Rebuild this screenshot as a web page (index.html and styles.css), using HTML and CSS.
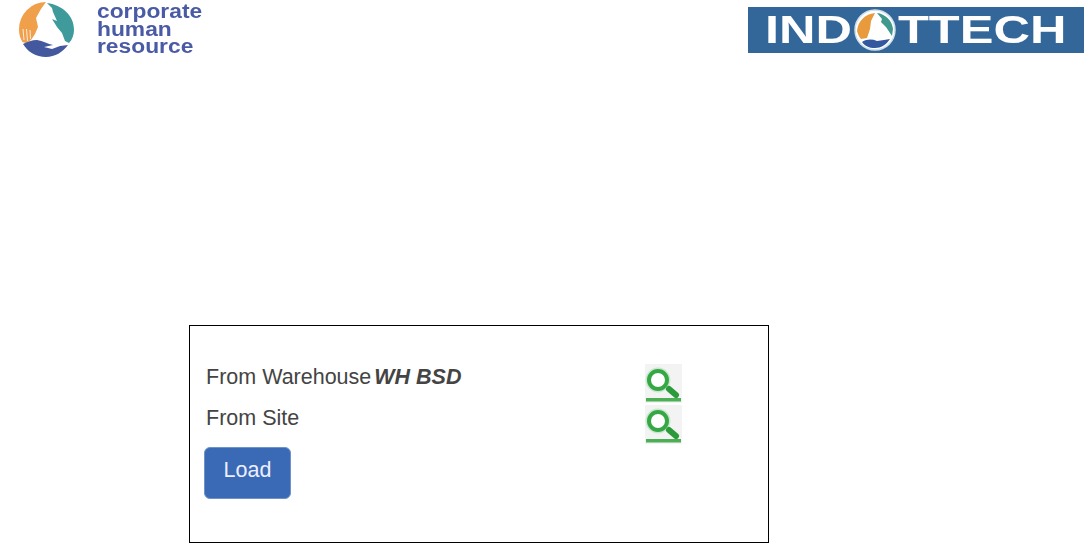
FILE: index.html
```html
<!DOCTYPE html>
<html lang="en">
<head>
<meta charset="utf-8">
<title>Load</title>
<link rel="stylesheet" href="styles.css">
</head>
<body>
<header class="top">
  <div class="brand">
    <svg class="brand-mark" viewBox="18 0 58 58" width="58" height="58" aria-hidden="true">
      <path fill="#f0a04b" d="M46 2A27 27 0 0 0 19 29C19 34 20 38 22.500 42L26 43 31 40 35 34 38 27 36 18 41 9z"/>
      <g stroke="#fff" stroke-width="0.8" fill="none"><path d="M23 29l1 11M26.500 29l1 12M30 30l0.500 9"/></g>
      <path fill="#3f9a9c" d="M47 3C62 5 74 15 74 30C74 35 72 40 69 43L65 41 62 33 57 27 52 19 57 21 53 12 52 8z"/>
      <path fill="#43589f" d="M23 44C27 42 32 40 37 40C43 41 48 44 53 45L44 47 52 49 60 46 68 45C63 52 55 57 46 57C36 57 28 52 23 44z"/>
    </svg>
    <div class="brand-name">corporate<br>human<br>resource</div>
  </div>
  <div class="partner">
    <span class="partner-left">IND</span>
    <svg class="partner-mark" viewBox="0 0 42 42" width="42" height="42" aria-hidden="true">
      <circle cx="21" cy="21" r="20" fill="#fff" stroke="#cfe0ea" stroke-width="1.500"/>
      <path fill="#e89a3c" d="M21 4C11 5 4 12 3 22C4 25 5 28 7 30L13 29 16 20 17 12z"/>
      <path fill="#3f9a8c" d="M23 4C31 5 38 11 39 20L38 27 32 18 27 13 28 10z"/>
      <path fill="#34589f" d="M8 33C13 30 18 30 23 32L30 31 36 30C32 36 27 39 21 39C15 39 11 37 8 33z"/>
    </svg>
    <span class="partner-right">TTECH</span>
  </div>
</header>
<main class="panel">
  <div class="row">
    <span class="label">From Warehouse</span><em class="value">WH BSD</em>
    <svg class="lookup" viewBox="0 0 37 39" width="37" height="39" aria-hidden="true">
      <rect width="37" height="39" fill="#f3f3f3"/>
      <circle cx="13" cy="16" r="12.500" fill="#c9e8cd"/>
      <circle cx="13" cy="16" r="9" fill="#fff" stroke="#35a845" stroke-width="4"/>
      <path d="M24 25l7 6" stroke="#2b9a3a" stroke-width="6" stroke-linecap="round"/>
      <rect x="1" y="34" width="35" height="3.500" fill="#4cae55"/>
    </svg>
  </div>
  <div class="row">
    <span class="label">From Site</span>
    <svg class="lookup" viewBox="0 0 37 39" width="37" height="39" aria-hidden="true">
      <rect width="37" height="39" fill="#f3f3f3"/>
      <circle cx="13" cy="16" r="12.500" fill="#c9e8cd"/>
      <circle cx="13" cy="16" r="9" fill="#fff" stroke="#35a845" stroke-width="4"/>
      <path d="M24 25l7 6" stroke="#2b9a3a" stroke-width="6" stroke-linecap="round"/>
      <rect x="1" y="34" width="35" height="3.500" fill="#4cae55"/>
    </svg>
  </div>
  <button class="load" type="button">Load</button>
</main>
</body>
</html>
```
FILE: styles.css
```css
html, body { margin: 0; padding: 0; background: #fff; overflow: hidden; }
body { font-family: "Liberation Sans", Arial, sans-serif; color: #444; }
.top { display: flex; justify-content: space-between; align-items: flex-start; height: 325px; }
.brand { display: flex; gap: 21px; padding-left: 18px; }
.brand-mark { filter: blur(0.4px); }
.brand-name { font-size: 20px; line-height: 17.500px; font-weight: bold; color: #4a5ba5; padding-top: 3px; transform: scaleX(1.14); transform-origin: left top; }
.partner { box-sizing: border-box; width: 336px; height: 46px; margin-top: 7px; padding-left: 17px; background: #336699; color: #fff; display: flex; align-items: center; font-size: 38px; font-weight: bold; white-space: nowrap; }
.partner-left, .partner-right { display: block; transform-origin: left center; }
.partner-left { width: 89px; transform: scaleX(1.33); }
.partner-right { width: 170px; margin-left: 2px; transform: scaleX(1.33); }
.partner-mark { flex: none; filter: blur(0.3px); }
.panel { box-sizing: border-box; width: 580px; height: 218px; margin-left: 189px; border: 1px solid #000; padding: 38px 0 0 14px; }
.row { display: flex; align-items: flex-start; height: 41px; font-size: 21.500px; line-height: 27px; padding-left: 2px; position: relative; }
.value { font-weight: bold; font-style: italic; margin-left: 3px; }
.lookup { position: absolute; left: 441px; top: 0; filter: blur(0.4px); }
.load { display: block; width: 87px; height: 52px; margin-top: 1px; padding: 0 0 5px; background: #3a6ab5; color: #eef; border: 1px solid #6f92c8; border-radius: 6px; font: 21.500px "Liberation Sans", Arial, sans-serif; }
```
